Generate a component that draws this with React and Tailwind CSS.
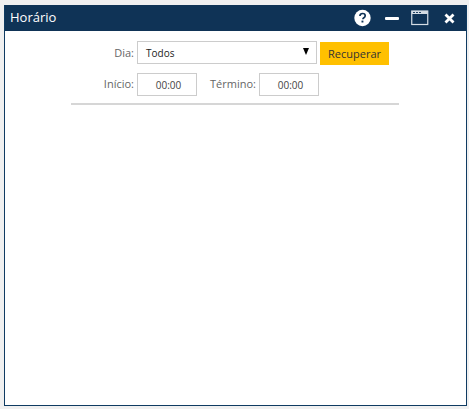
import React from "react";

const Field = ({ value }) => (
  <div className="w-[60px] h-[23px] border border-[#cccccc] flex items-center justify-center pt-[2px] pl-[3px] text-[10px] text-[#444444]">
    {value}
  </div>
);

const App = () => {
  return (
    <div className="w-[469px] h-[409px] bg-[#f0f0f0] pt-[5px] pl-[4px] font-['Open_Sans',sans-serif]">
      <div className="w-[463px] h-[401px] flex flex-col bg-white border border-[#0f3b62] border-t-0">
        <div className="h-[26px] shrink-0 bg-[#0f3356] flex items-center justify-between pl-[5px] pr-[11px] text-white">
          <span className="text-[13px] leading-none mb-[1px]">Horário</span>
          <div className="flex items-center">
            <svg width="18" height="18" viewBox="0 0 18 18">
              <circle cx="8.5" cy="9" r="8.2" fill="#fff" />
              <path d="M5.9 7c.1-1.6 1.2-2.5 2.7-2.5s2.6.9 2.6 2.2c0 1-.5 1.5-1.3 2-.7.5-1 .8-1 1.6" fill="none" stroke="#0f3356" strokeWidth="1.7" />
              <rect x="7.5" y="11.6" width="1.9" height="1.9" fill="#0f3356" />
            </svg>
            <div className="w-[14px] h-[3px] rounded-[1px] bg-white ml-[13px]" />
            <svg className="ml-[12px]" width="18" height="18" viewBox="0 0 18 18">
              <rect x="0.75" y="2" width="16" height="13.5" fill="none" stroke="#d5dde5" strokeWidth="1.2" />
              <rect x="0.75" y="2" width="16" height="3" fill="#d5dde5" />
              <path d="M2 3.5h2M5 3.5h2M8 3.5h2" stroke="#0f3356" strokeWidth="0.9" />
            </svg>
            <svg className="ml-[15px]" width="11" height="11" viewBox="0 0 11 11">
              <path d="M1.5 1.5l8 8M9.5 1.5l-8 8" stroke="#fff" strokeWidth="2.8" />
            </svg>
          </div>
        </div>
        <div className="w-[328px] ml-[66px] pt-[10px] text-[11px] text-[#666666]">
          <div className="flex items-start h-[24px]">
            <label className="w-[63px] h-[23px] leading-[23px] text-right">Dia:</label>
            <div className="ml-[3px] w-[180px] h-[23px] border border-[#cccccc] flex items-center justify-between pl-[8px] pr-[7px] text-[10px] text-[#222222]">
              <span className="mt-[2px]">Todos</span>
              <span className="w-0 h-0 border-x-[3.5px] border-x-transparent border-t-[7px] border-t-black mb-[3px]" />
            </div>
            <button className="ml-[3px] mt-[1px] w-[69px] h-[23px] pt-[2px] bg-[#ffc000] text-[11px] text-[#333333]">
              Recuperar
            </button>
          </div>
          <div className="flex items-center mt-[8px]">
            <label className="w-[63px] text-right">Início:</label>
            <div className="ml-[3px]"><Field value="00:00" /></div>
            <label className="ml-[13px] w-[45px]">Término:</label>
            <div className="ml-[4px]"><Field value="00:00" /></div>
          </div>
          <div className="h-[2px] bg-[#d6d6d6] mt-[7px]" />
        </div>
      </div>
    </div>
  );
};

export default App;
